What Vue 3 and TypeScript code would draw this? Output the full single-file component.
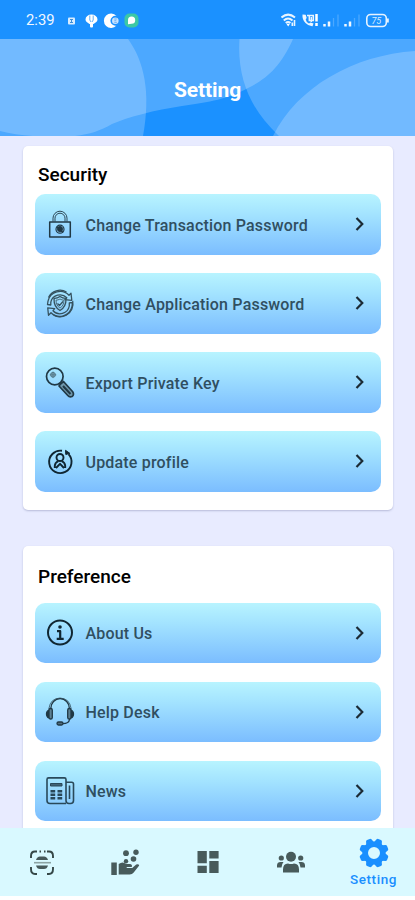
<script setup lang="ts">
interface Row { label: string; icon: string }
interface Section { title: string; rows: Row[] }

const sections: Section[] = [
  {
    title: 'Security',
    rows: [
      { label: 'Change Transaction Password', icon: 'lock' },
      { label: 'Change Application Password', icon: 'shield' },
      { label: 'Export Private Key', icon: 'key' },
      { label: 'Update profile', icon: 'profile' },
    ],
  },
  {
    title: 'Preference',
    rows: [
      { label: 'About Us', icon: 'info' },
      { label: 'Help Desk', icon: 'headset' },
      { label: 'News', icon: 'news' },
    ],
  },
]
const teeth = [22.5, 67.5, 112.5, 157.5, 202.5, 247.5, 292.5, 337.5]
</script>

<template>
  <div class="screen">
    <div class="status">
      <span class="time">2:39</span>
      <svg class="notes" width="74" height="18" viewBox="0 0 74 18">
        <rect x="2" y="6.500" width="7" height="7" rx="1" fill="#d8ecff" />
        <path d="M4 8.500h3M4 11.500h3M5.500 8v4" stroke="#3f8fd8" stroke-width="1" />
        <path d="M19.500 8.500a6 5 0 0 1 12 0c0 2.200-2 3.200-4 4.500h-4c-2-1.300-4-2.300-4-4.500z" fill="#fff" />
        <path d="M23.800 4.500v4.500l1.200 2M27.200 4.500v4.500l-1.200 2" fill="none" stroke="#63aef3" stroke-width="1" />
        <rect x="24" y="12" width="3" height="4.500" rx="1" fill="#fff" />
        <path d="M50.500 5A7.200 7.200 0 1 0 50.500 14.500A4.900 4.900 0 1 1 50.500 5z" fill="#fff" />
        <circle cx="49.300" cy="9.700" r="3.300" fill="#c8e3ff" />
        <path d="M48.300 8h2.500M48.300 9.700h2M48.300 11.400h2.500" stroke="#5aa9f4" stroke-width=".8" />
        <rect x="58.500" y="2.500" width="14" height="14" rx="5" fill="#3dc8a5" />
        <path d="M62 13.200v-4a3.600 3.600 0 1 1 3.600 3.600z" fill="#fff" />
      </svg>
      <span class="grow"></span>
      <svg class="signals" width="110" height="18" viewBox="0 0 110 18">
        <g fill="none" stroke="#e8f4ff" stroke-width="2">
          <path d="M.500 6.500Q7 .800 14 6.500" />
          <path d="M2.800 9.500Q7 5.500 11.500 9.500" />
          <path d="M4.800 12Q7 10 9.500 12" />
        </g>
        <path d="M7.200 15.500l-1.800-2.700h3.600z" fill="#fff" />
        <path d="M13.500 9v6M11.300 11.500v3.500" stroke="#e8f4ff" stroke-width="1.600" />
        <path d="M21.500 3.500q-.500 5 3 8.500t7 3.300l1-2.800-3-1-1.500 1q-3-1.500-3.300-4.300l1-1.300-1-3.200z" fill="#eff7ff" />
        <path d="M26 4.500h7M28.300 4.500v5h4v-5M30.300 6v5" fill="none" stroke="#e8f4ff" stroke-width="1.500" />
        <path d="M35.500 3v7.500M35.500 12v3" stroke="#fff" stroke-width="2.500" />
        <path d="M43.500 13v2.500M48 10.500v5" stroke="#f0f8ff" stroke-width="2.500" />
        <path d="M52.500 7v8.500M57 3.500v12" stroke="#4ba8ff" stroke-width="1.300" />
        <path d="M64.500 13v2.500M69 10.500v5" stroke="#f0f8ff" stroke-width="2.500" />
        <path d="M73.500 7v8.500M78 3.500v12" stroke="#4ba8ff" stroke-width="1.300" />
        <rect x="85.800" y="3.500" width="19.500" height="12" rx="3.800" fill="none" stroke="#e5f2ff" stroke-width="1.600" />
        <path d="M106.800 7.500v4" stroke="#e5f2ff" stroke-width="2" />
        <text x="95.300" y="12.800" text-anchor="middle" class="battery">75</text>
      </svg>
    </div>

    <header class="header">
      <svg class="waves" viewBox="0 39 415 97" preserveAspectRatio="none">
        <g fill="#fff" fill-opacity=".215">
          <path d="M0 39H293C280 68 266 79 248 88C228 99 210 102 182 106C155 110 128 117 112 124C100 131 90 134 75 136H33Q15 135 0 131z" />
          <path d="M0 39H128C144 61 151 92 143 136H0z" />
          <path d="M239.500 39C237 78 250 109 279 136H415V39z" />
          <path d="M273 136C297 87 354 55 415 51V136z" />
        </g>
      </svg>
      <h1>Setting</h1>
    </header>

    <main class="content">
      <section v-for="s in sections" :key="s.title" class="card">
        <h2>{{ s.title }}</h2>
        <div class="rows">
          <div v-for="r in s.rows" :key="r.label" class="row">
            <svg class="icon" width="32" height="32" viewBox="0 0 32 32" fill="none" stroke="#203845" stroke-width="1.500" stroke-linejoin="round">
              <g v-if="r.icon === 'lock'">
                <rect x="5.700" y="12.900" width="20.600" height="15" />
                <path d="M9 12.500V9.200a7 7 0 0 1 14 0v3.300M11 12.500V9.200a5 5 0 0 1 10 0v3.300" stroke-width=".900" />
                <circle cx="16" cy="20.200" r="4" stroke-width="1.200" />
                <circle cx="16" cy="20" r="2.200" fill="#203845" />
                <path d="M13 17.500l6 6" />
              </g>
              <g v-else-if="r.icon === 'shield'" stroke="#35525f" stroke-width="1.300">
                <path d="M4 13A12.500 12.500 0 0 1 25 7.200l2-2 .800 7.200-7-.700 2-2A9.500 9.500 0 0 0 6.800 14M28 18.500A12.500 12.500 0 0 1 7 24.800l-2.500 2.500-.800-7.500 7 .900-1.700 2A9.500 9.500 0 0 0 25.300 18" />
                <path d="M4.500 9.500A12.800 12.800 0 0 1 22.500 4M28.700 13a13 13 0 0 1-6.500 14.200M4 13l-.500 3.500 3.300.500V14M28 18.500l.500-4-3.200.300V18M9.500 27a13 13 0 0 0 12.700.2" />
                <path d="M16 8.500q3 2 6 1.800c.2 6-1.300 9.700-6 12.200-4.700-2.500-6.200-6.200-6-12.200q3 .2 6-1.800z" />
                <path d="M16 11q2 1.200 4 1.200c-.2 3.800-1.300 6.200-4 7.900-2.700-1.700-3.800-4.100-4-7.900q2 0 4-1.200z" stroke-width=".8" />
                <path d="M13.500 15.500l2 2 3.500-4" />
              </g>
              <g v-else-if="r.icon === 'key'" stroke-width="1.700">
                <circle cx="10.800" cy="9.500" r="8.300" />
                <circle cx="9" cy="7.800" r="2.400" stroke="#527888" stroke-width="1" fill="#7ea5b7" />
                <path d="M9 4.500v6.600M5.700 7.800h6.600" stroke="#527888" stroke-width=".8" />
                <path d="M16.500 17l3-2.500 9.200 10.200q1.800 3-.7 4.800-2.500 1-4.200-1L15 19z" fill="#6f98ad" />
                <path d="M19 19l7.500 8" stroke-width="2" />
              </g>
              <g v-else-if="r.icon === 'profile'" stroke="#102632" stroke-width="1.900">
                <path d="M24.500 8.200A11.200 11.200 0 1 1 18 4.800" />
                <path d="M21.500 4.300l.3 4.200 4-1.200z" fill="#102632" stroke-width="1" />
                <circle cx="16" cy="11.500" r="3.500" />
                <path d="M10.800 22v-2.200q.2-3.200 3.500-4.600M21.200 22v-2.200q-.2-3.200-3.500-4.600M12 22l4-4.200 4 4.200" />
              </g>
              <g v-else-if="r.icon === 'info'" stroke="#102632">
                <circle cx="16" cy="15.500" r="12" stroke-width="2" />
                <circle cx="16" cy="10" r="1.800" fill="#102632" stroke="none" />
                <path d="M13 14.200h3.200v7.200M12.700 21.800h7" stroke-width="2.200" />
              </g>
              <g v-else-if="r.icon === 'headset'" stroke-width="1.300">
                <path d="M6.800 13.500V12.500a9.300 9.800 0 0 1 18.600 0v1M25.500 22v1.500q-.5 4-7 4.200" />
                <path d="M5 13.500V12q1.500-9.500 11-10 9.500.500 11 10v1.500" stroke-width=".7" />
                <rect x="5" y="12.500" width="3.300" height="10.500" rx="1.600" fill="#5d8093" />
                <rect x="23.700" y="12.500" width="3.300" height="10.500" rx="1.600" fill="#5d8093" />
                <path d="M5 14q-2.500 1-2.500 4T5 22M27 14q2.500 1 2.500 4T27 22" fill="#203845" />
                <rect x="13" y="26" width="6" height="3" rx="1.500" fill="#526d7d" />
              </g>
              <g v-else stroke-width="1.600" stroke="#29495a">
                <path d="M22 28.500H6q-3 0-3-3v-21q0-1.600 1.600-1.600h15.800q1.600 0 1.600 1.600v21q0 3 3 3h1.500q3 0 3-3V9q0-1.700-1.800-1.700H22" />
                <path d="M25.500 10.500V24" />
                <path d="M6.500 8.500h11.500v2.500H6.500z" stroke-width="1" fill="#426477" />
                <path d="M6.500 16.300h4.700M13.500 16.300h4.700M6.500 19.800h4.700M13.500 19.800h4.700M6.500 23.300h4.700M13.500 23.300h4.700" stroke-width="2.500" />
              </g>
            </svg>
            <span class="label">{{ r.label }}</span>
            <svg class="chev" width="10" height="16" viewBox="0 0 10 16" fill="none" stroke="#1c2b35" stroke-width="2.200">
              <path d="M1.500 2l5.800 6-5.800 6" />
            </svg>
          </div>
        </div>
      </section>
    </main>

    <nav class="nav">
      <div class="tab">
        <svg width="28" height="28" viewBox="0 0 28 28" fill="none" stroke="#354747" stroke-width="1.900">
          <path d="M3 10V8q0-4.500 4-4.500h2M19 3.500h2q4 0 4 4.500v2M25 19v2q0 5-4 5h-2M9 26H7q-4 0-4-5v-2M11.500 3.500h1.500M16 3.500h1.500" />
          <path d="M8 12q1-3.500 4-3.500h4q3 0 4 3.500zM8 17.500q1 3.500 4 3.500h4q3 0 4-3.500z" fill="#46595a" stroke="none" />
          <path d="M6 14.700h17" stroke="#8ba3a3" stroke-width="1.600" />
        </svg>
      </div>
      <div class="tab">
        <svg width="30" height="28" viewBox="0 0 30 28" fill="#485b5b">
          <rect x="1.300" y="14.500" width="5.500" height="12.500" />
          <path d="M8.700 16q4-3 7.500 0h4q2.500.600 1.500 3h-5v1h5.500l4-3.500q2.500-1 3 1l-5.500 7q-1.500 2-4 2h-11z" />
          <circle cx="16" cy="5.200" r="2.900" /><circle cx="26" cy="4.200" r="2.700" /><circle cx="23.500" cy="11" r="2.800" /><circle cx="16" cy="13.300" r="2.200" />
        </svg>
      </div>
      <div class="tab">
        <svg width="26" height="26" viewBox="0 0 26 26" fill="#485b5b">
          <path d="M2.500 2h9.300v12.300H2.500zM14.300 2h9.300v7.500h-9.300zM2.500 16.700h9.300V24H2.500zM14.300 12h9.300v12h-9.300z" />
        </svg>
      </div>
      <div class="tab">
        <svg width="30" height="26" viewBox="0 0 30 26" fill="#485b5b">
          <circle cx="15" cy="7.800" r="5" /><circle cx="5.300" cy="9" r="2.600" /><circle cx="24.700" cy="9" r="2.600" />
          <path d="M7 23.500v-3q0-6 5-6 3 1 6 0 5 0 5 6v3zM1 18.500v-2.300q.3-3.200 3.500-3.200h3Q5.700 15 5.500 18.500zM29 18.500v-2.300q-.3-3.200-3.500-3.200h-3q1.800 2 2 5.500z" />
        </svg>
      </div>
      <div class="tab active">
        <svg width="32" height="32" viewBox="0 0 32 32">
          <circle cx="16" cy="16" r="8.800" fill="none" stroke="#198fff" stroke-width="5.600" />
          <path v-for="a in teeth" :key="a" d="M11.800 6l1.300-3.700q.5-1 1.500-1h2.800q1 0 1.500 1L20.200 6z" fill="#198fff" :transform="`rotate(${a} 16 16)`" />
        </svg>
        <span>Setting</span>
      </div>
    </nav>
  </div>
</template>

<style>
body { background: #fff; }
</style>

<style scoped>
.screen { width: 415px; height: 900px; display: flex; flex-direction: column; overflow: hidden; font-family: Roboto, "Liberation Sans", sans-serif; background: #fff; }
.status { flex: none; height: 39px; box-sizing: border-box; display: flex; align-items: center; padding: 1px 24px 0 26px; background: #1b91ff; color: #f1f8ff; }
.time { width: 40px; font-size: 14.800px; line-height: 18px; }
.grow { flex: 1; }
.signals { flex: none; }
.battery { font: italic 9px Roboto, sans-serif; fill: #d9edff; }
.header { flex: none; height: 97px; display: grid; background: #1b91ff; }
.header > * { grid-area: 1 / 1; }
.waves { width: 415px; height: 97px; display: block; }
h1 { margin: 0; padding-top: 4px; align-self: center; text-align: center; color: #fff; font-size: 21px; line-height: 24px; font-weight: 700; position: relative; letter-spacing: -.1px; }
.content { height: 692px; box-sizing: border-box; flex: none; overflow: hidden; background: #e8ebff; padding: 10px 22.500px 0 23px; display: flex; flex-direction: column; gap: 36.600px; }
.card { flex: none; background: #fff; border-radius: 5px; box-shadow: 0 1px 2px rgba(70, 75, 130, .3); padding: 17px 12px 18px; }
h2 { margin: 0 0 8px 3px; color: #000; font-size: 19px; line-height: 23px; font-weight: 500; }
.card + .card { padding-top: 18.500px; }
.card + .card h2 { margin-bottom: 14.700px; }
.rows { display: flex; flex-direction: column; gap: 18.200px; }
.row { height: 60.800px; border-radius: 10px; background: linear-gradient(#b8f4ff, #a4e4ff 32%, #7bbdff); display: flex; align-items: center; padding: 0 16px 0 9px; }
.icon { flex: none; margin: 1px 9.500px 0 0; }
.label { flex: 1; color: #304f61; font-size: 16px; line-height: 20px; font-weight: 500; letter-spacing: .18px; padding-top: 3px; white-space: nowrap; }
.nav { flex: none; height: 68px; background: #d9f9ff; display: grid; grid-template-columns: repeat(5, 1fr); }
.tab { display: flex; flex-direction: column; align-items: center; justify-content: center; }
.active { justify-content: flex-start; padding-top: 9px; color: #198fff; font-size: 13.500px; line-height: 16px; font-weight: 500; letter-spacing: .55px; gap: 2px; }
</style>
